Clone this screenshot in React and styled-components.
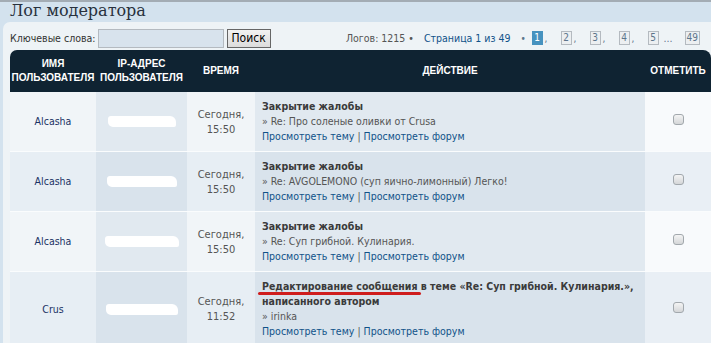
import React from "react";
import styled, { createGlobalStyle } from "styled-components";

const GlobalStyle = createGlobalStyle`
  body {
    margin: 0;
    background: #d3e2ee;
    font-family: "DejaVu Sans Condensed", "DejaVu Sans", "Liberation Sans", sans-serif;
    font-stretch: condensed;
  }
`;

const Page = styled.div`
  border-top: 2px solid #a3acb4;
  overflow: hidden;
`;

const Title = styled.h2`
  margin: 0;
  padding: 0 10px;
  height: 20px;
  line-height: 18px;
  font-family: "DejaVu Serif", "Liberation Serif", serif;
  font-stretch: normal;
  font-weight: normal;
  font-size: 16px;
  color: #28313d;
`;

const Panel = styled.div`
  margin-left: 3px;
  background: #eef3f6;
  border-radius: 7px 0 0 0;
  padding: 5px 0 0 7px;
`;

const Toolbar = styled.div`
  display: flex;
  justify-content: space-between;
  align-items: center;
  height: 22px;
  margin-bottom: 1px;
`;

const Search = styled.div`
  display: flex;
  align-items: center;
  font-size: 10.5px;
  color: #333;
`;

const Input = styled.input`
  width: 124px;
  height: 17px;
  margin: 0 3px 0 2px;
  padding: 0;
  border: 1px solid #b4bac0;
  background: #d8e3ed;
`;

const Button = styled.button`
  height: 19px;
  padding: 0 4px;
  border: 1px solid #666;
  background: linear-gradient(#f2f2f2, #dcdcdc);
  font-family: inherit;
  font-stretch: condensed;
  font-size: 12px;
  color: #000;
`;

const Info = styled.div`
  display: flex;
  align-items: center;
  padding-right: 11px;
  font-size: 10.5px;
  color: #555;
`;

const Link = styled.a`
  color: #105289;
  text-decoration: none;
`;

const Count = styled.span`
  margin-right: 10px;
`;

const Pages = styled.span`
  display: flex;
  align-items: center;
`;

const PageBox = styled.span`
  display: inline-block;
  min-width: 7px;
  padding: 0 1px;
  line-height: 12px;
  font-size: 10px;
  text-align: center;
  border: 1px solid ${(p) => (p.$active ? "#4692bf" : "#b4bac0")};
  background: ${(p) => (p.$active ? "#4692bf" : "#eceff1")};
  color: ${(p) => (p.$active ? "#fff" : "#5c758c")};
`;

const Sep = styled.span`
  display: inline-block;
  width: ${(p) => p.$w || 16}px;
  font-size: 10px;
  color: #5c758c;
  padding-left: ${(p) => p.$pl ?? 2}px;
`;

const Table = styled.table`
  width: 701px;
  table-layout: fixed;
  border-collapse: separate;
  border-spacing: 0;
`;

const Th = styled.th`
  height: 42px;
  padding: 0;
  background: #0f2332;
  color: #fff;
  font-family: "Liberation Sans", sans-serif;
  font-stretch: normal;
  font-weight: bold;
  font-size: 10px;
  line-height: 14px;
  text-transform: uppercase;
  text-align: center;
  white-space: nowrap;
  &:first-child { border-radius: 7px 0 0 0; }
  &:last-child { border-radius: 0 8px 0 0; }
`;

const Row = styled.tr`
  --light: ${(p) => (p.$alt ? "#e7eef4" : "#f1f5f8")};
  --dark: ${(p) => (p.$alt ? "#d9e3ec" : "#e1e9f0")};
  --mark: ${(p) => (p.$alt ? "#e9eff5" : "#f8fafc")};
`;

const Td = styled.td`
  height: 59px;
  padding: 0;
  border-bottom: 1px solid #fafcfd;
  font-size: 10.5px;
  line-height: 15px;
  text-align: center;
  vertical-align: middle;
  background: var(--${(p) => p.$shade || "light"});
`;

const Name = styled(Link)`
  color: #1b3264;
`;

const Blot = styled.div`
  width: ${(p) => p.$w}px;
  height: 11px;
  margin: 0 auto;
  background: #fff;
  border-radius: 3px 6px 2px 5px;
`;

const Time = styled.div`
  color: #555;
  font-size: 11px;
`;

const Action = styled(Td)`
  height: 45px;
  text-align: left;
  padding: 7px 2px 7px 7px;
  color: #555;
`;

const Strong = styled.div`
  font-weight: bold;
  color: #3b3b3b;
`;

const Marked = styled.span`
  position: relative;
  &::after {
    content: "";
    position: absolute;
    left: -4px;
    right: -3px;
    bottom: -3px;
    height: 3px;
    border-radius: 2px;
    background: #cf1d1d;
  }
`;

const Bar = styled.span`
  color: #555;
  margin: 0 3px;
`;

const Check = styled.input`
  appearance: none;
  width: 11px;
  height: 11px;
  margin: 0;
  border: 1px solid #a2a8ad;
  border-radius: 3px;
  background: linear-gradient(#f4f4f4, #d4d6d8);
`;

const rows = [
  { name: "Alcasha", blot: 68, date: "15:50", title: "Закрытие жалобы", sub: "» Re: Про соленые оливки от Crusa" },
  { name: "Alcasha", blot: 70, date: "15:50", title: "Закрытие жалобы", sub: "» Re: AVGOLEMONO (суп яично-лимонный) Легко!" },
  { name: "Alcasha", blot: 74, date: "15:50", title: "Закрытие жалобы", sub: "» Re: Суп грибной. Кулинария." },
  { name: "Crus", blot: 72, date: "11:52", edit: true, sub: "» irinka" },
];

export default function App() {
  return (
    <Page>
      <GlobalStyle />
      <Title>Лог модератора</Title>
      <Panel>
        <Toolbar>
          <Search>
            Ключевые слова:
            <Input />
            <Button>Поиск</Button>
          </Search>
          <Info>
            <Count>Логов: 1215 •</Count>
            <Link href="#">Страница 1 из 49</Link>
            <Pages>
              <Sep $w={11} $pl={10}>•</Sep>
              <PageBox $active>1</PageBox><Sep>,</Sep>
              <PageBox>2</PageBox><Sep>,</Sep>
              <PageBox>3</PageBox><Sep>,</Sep>
              <PageBox>4</PageBox><Sep>,</Sep>
              <PageBox>5</PageBox><Sep $w={21} $pl={5}>…</Sep>
              <PageBox>49</PageBox>
            </Pages>
          </Info>
        </Toolbar>
        <Table>
          <colgroup>
            <col style={{ width: 86 }} />
            <col style={{ width: 91 }} />
            <col style={{ width: 68 }} />
            <col style={{ width: 390 }} />
            <col style={{ width: 66 }} />
          </colgroup>
          <thead>
            <tr>
              <Th>Имя<br />пользователя</Th>
              <Th>IP-адрес<br />пользователя</Th>
              <Th>Время</Th>
              <Th>Действие</Th>
              <Th>Отметить</Th>
            </tr>
          </thead>
          <tbody>
            {rows.map((r, i) => (
              <Row key={i} $alt={i % 2 === 1}>
                <Td><Name href="#">{r.name}</Name></Td>
                <Td $shade="dark"><Blot $w={r.blot} /></Td>
                <Td><Time>Сегодня,<br />{r.date}</Time></Td>
                <Action $shade="dark">
                  {r.edit ? (
                    <Strong>
                      <Marked>Редактирование сообщения</Marked> в теме «Re: Суп грибной. Кулинария.»,
                      написанного автором
                    </Strong>
                  ) : (
                    <Strong>{r.title}</Strong>
                  )}
                  <div>{r.sub}</div>
                  <div>
                    <Link href="#">Просмотреть тему</Link>
                    <Bar>|</Bar>
                    <Link href="#">Просмотреть форум</Link>
                  </div>
                </Action>
                <Td $shade="mark"><Check type="checkbox" /></Td>
              </Row>
            ))}
          </tbody>
        </Table>
      </Panel>
    </Page>
  );
}
